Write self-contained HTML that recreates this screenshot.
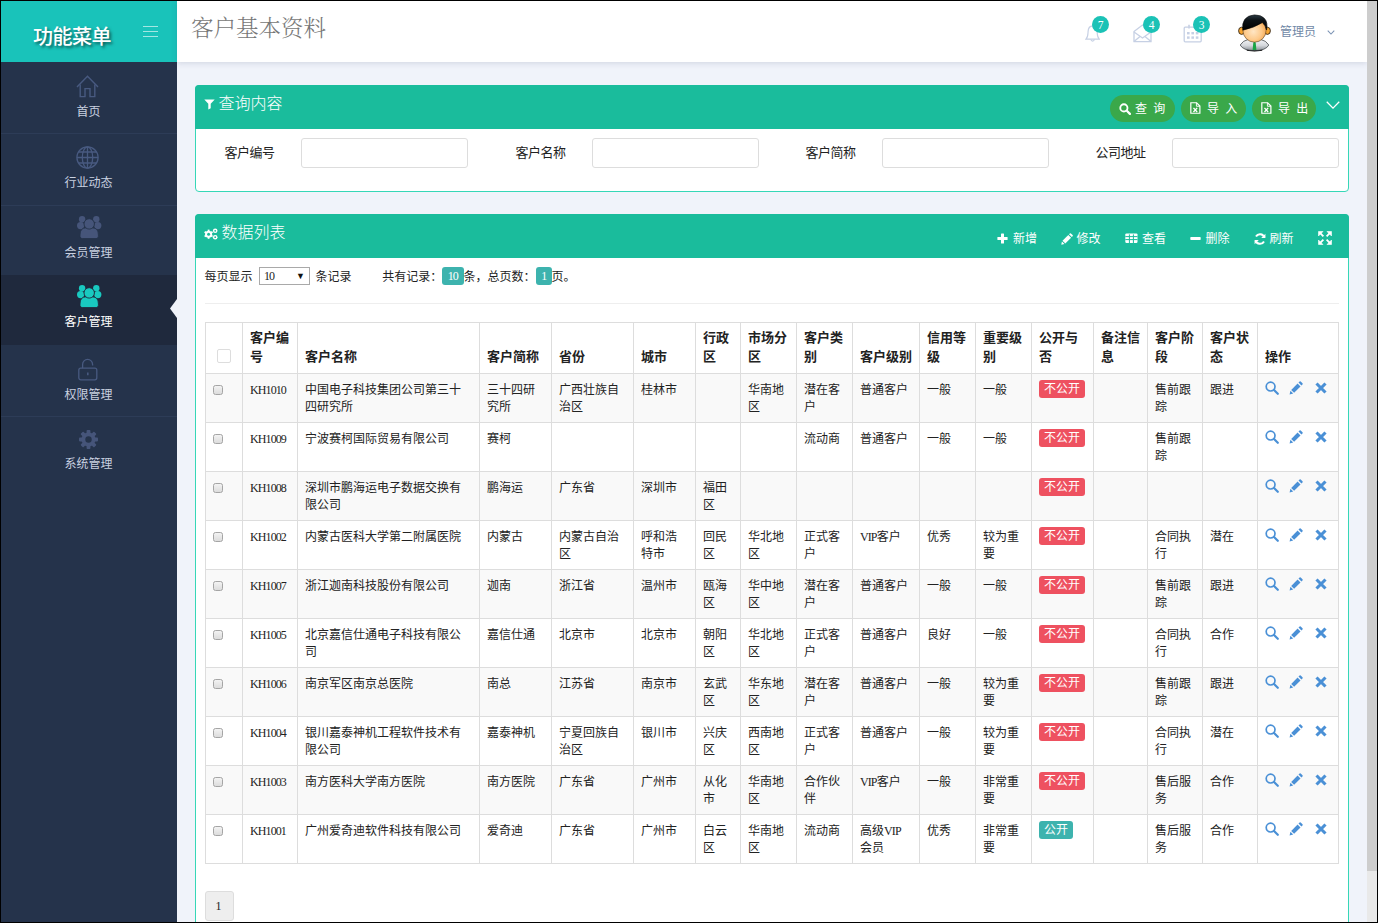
<!DOCTYPE html>
<html lang="zh-CN">
<head>
<meta charset="utf-8">
<title>客户基本资料</title>
<style>
*{box-sizing:border-box;}
html,body{margin:0;padding:0;}
body{width:1378px;height:923px;overflow:hidden;background:#f0f3fa;font-family:"Liberation Sans","Noto Sans CJK SC",sans-serif;font-size:12px;color:#333;position:relative;}
#frame{position:absolute;left:0;top:0;width:1378px;height:923px;overflow:hidden;}
#edge{position:absolute;left:0;top:0;width:1378px;height:923px;border:1px solid #000;z-index:99;pointer-events:none;}
.abs{position:absolute;}
/* sidebar */
#side{position:absolute;left:0;top:0;width:177px;height:923px;background:#25334b;}
#brand{position:absolute;left:0;top:0;width:177px;height:62px;background:#19c3ba;}
#brand .t{position:absolute;left:33px;top:21.5px;font-size:20px;line-height:30px;font-weight:500;color:#fff;letter-spacing:-.5px;text-shadow:2px 2px 3px rgba(0,0,0,.55);white-space:nowrap;}
#brand i{position:absolute;left:143px;width:15px;height:1px;background:rgba(255,255,255,.6);}
.mi{position:absolute;left:0;width:177px;}
.mi .lb{position:absolute;left:0;width:177px;text-align:center;font-size:12px;line-height:16px;color:#c9d1e0;}
.mi svg{position:absolute;}
.mi.on{background:#1f293d;}
.mi.on .lb{color:#fff;}
.sep{position:absolute;left:0;width:177px;height:1px;background:#2d3c57;}
/* top */
#top{position:absolute;left:177px;top:0;width:1190px;height:62px;background:#fff;box-shadow:0 1px 6px rgba(60,70,110,.18);}
#top h1{position:absolute;left:14px;top:11.5px;margin:0;font-family:"Liberation Serif","Noto Serif CJK SC",serif;font-weight:300;font-size:22.5px;line-height:34px;color:#777;white-space:nowrap;}
.bdg{position:absolute;top:16px;width:17px;height:17px;border-radius:50%;background:#1bc2b6;color:#fff;font-family:"Liberation Serif",serif;font-size:11.5px;line-height:18.5px;text-align:center;}
#user{position:absolute;left:1102px;top:24px;font-size:12px;line-height:16px;color:#7088a6;white-space:nowrap;}
/* scroll */
#sb{position:absolute;left:1367px;top:0;width:11px;height:923px;background:#e9e9e9;}
#sb b{position:absolute;left:0;top:0;width:11px;height:871px;background:#cdcdcd;}
/* panels */
.pn{position:absolute;left:195px;width:1154px;background:#fff;border:1px solid #36d7b7;border-radius:4px;}
.ph{position:absolute;left:-1px;top:-1px;width:1154px;height:44px;background:#1abc9c;border-radius:4px 4px 0 0;color:#fff;}
.ph .tt{position:absolute;left:23.5px;top:8px;font-family:"Liberation Serif","Noto Sans CJK SC",sans-serif;font-weight:300;font-size:16px;line-height:22px;white-space:nowrap;}
.gb{position:absolute;top:10px;height:27px;width:65px;border-radius:14px;background:#3aa84a;color:#fff;font-size:12px;line-height:28.5px;white-space:nowrap;}
.gb span{position:absolute;left:25px;top:0;word-spacing:3px;}
.gb svg{position:absolute;}
.fl{position:absolute;top:57px;width:80px;text-align:right;font-size:13px;line-height:20px;color:#222;white-space:nowrap;letter-spacing:-.5px;}
.fi{position:absolute;top:52px;width:167px;height:30px;border:1px solid #ddd;border-radius:3px;background:#fff;}
.tl{position:absolute;top:15px;font-size:12px;line-height:20px;color:#fff;white-space:nowrap;}
.tl svg{position:absolute;}

.rc{position:absolute;top:51.5px;font-size:12px;line-height:20px;color:#222;white-space:nowrap;}
.sel{position:absolute;left:63px;top:52px;width:51px;height:18px;border:1px solid #a9a9a9;background:#fff;font-size:12px;line-height:16px;padding-left:4px;color:#222;}
.sel b{position:absolute;right:4px;top:0;font-size:9px;font-weight:normal;color:#111;}
.rb{position:absolute;top:52px;height:18px;border-radius:3px;background:#3db3ae;color:#fff;font-size:12px;line-height:18px;text-align:center;}
.hr{position:absolute;left:9px;top:88px;width:1134px;height:1px;background:#eee;}
.la{font-family:"Liberation Serif",serif;letter-spacing:-.9px;}
table.grid{position:absolute;left:9px;top:107px;width:1133px;border-collapse:collapse;table-layout:fixed;font-size:12px;line-height:17px;color:#222;}
table.grid td,table.grid th{border:1px solid #ddd;padding:8px 8px 6px 7px;vertical-align:top;text-align:left;word-break:break-all;}
table.grid th{font-size:13px;line-height:18.5px;font-weight:bold;vertical-align:bottom;height:51px;padding:4px 4px 7px 7px;color:#222;}
table.grid td{height:49px;}
tr.odd td{background:#f9f9f9;}
.ck{display:block;width:10px;height:10px;margin:3px 0 0 0;border:1px solid #a5a5a5;border-radius:2.5px;background:linear-gradient(#f3f3f3,#dcdcdc);}
.hck{display:block;width:14px;height:14px;margin:0 0 3px 4px;border:1px solid #ddd;border-radius:2px;background:#fff;}
.lb2{position:relative;top:-2px;display:inline-block;height:18px;line-height:19px;padding:0 5px;border-radius:3px;color:#fff;font-size:12px;vertical-align:top;}
.npub{background:#ee5160;}
.pub{background:#3db3ae;}
.ops{position:relative;top:-2px;height:17px;}
.ops svg{position:absolute;}
.pg{position:absolute;left:9px;top:676px;width:29px;height:30px;border:1px solid #ddd;border-radius:3px;background:#eee;text-align:center;font-size:12px;line-height:28px;color:#222;padding-right:3px;}
</style>
</head>
<body>
<div id="frame">
<div id="side">
 <div id="brand"><div class="t">功能菜单</div><i style="top:26px"></i><i style="top:31px"></i><i style="top:36px"></i></div>
 <div class="mi on" style="top:275px;height:70px"></div>
 <div class="sep" style="top:133px"></div><div class="sep" style="top:205px"></div><div class="sep" style="top:416px"></div>
 <!-- home -->
 <svg class="abs" style="left:76px;top:75px" width="23" height="23" viewBox="0 0 23 23" fill="none" stroke="#485a80" stroke-width="1.4"><path d="M1 12 L11.5 1.2 L22 12"/><path d="M4.2 9.5 V21.6 H9 V13.6 H14 V21.6 H18.8 V9.5"/></svg>
 <div class="mi"><div class="lb" style="top:104px">首页</div></div>
 <!-- globe -->
 <svg class="abs" style="left:76px;top:146px" width="23" height="23" viewBox="0 0 23 23" fill="none" stroke="#485a80" stroke-width="1.3"><circle cx="11.5" cy="11.5" r="10.6"/><ellipse cx="11.5" cy="11.5" rx="5.2" ry="10.6"/><path d="M11.5 .9 V22.1 M.9 11.5 H22.1 M2.6 6 H20.4 M2.6 17 H20.4"/></svg>
 <div class="mi"><div class="lb" style="top:175px">行业动态</div></div>
 <!-- users -->
 <svg class="abs" style="left:76.8px;top:215.6px" width="25" height="23" viewBox="0 0 25 23" fill="#46557a"><circle cx="5.1" cy="3.2" r="3.2"/><circle cx="19.3" cy="3.2" r="3.2"/><circle cx="3.6" cy="9.6" r="3.6"/><circle cx="20.8" cy="9.6" r="3.6"/><path d="M3 20.3 V19 Q3 11.8 9 11.8 H15.4 Q21.4 11.8 21.4 19 V20.3 Q21.4 22.6 19.2 22.6 H5.2 Q3 22.6 3 20.3 Z" stroke="#25334b" stroke-width=".9"/><circle cx="12.2" cy="7.9" r="5.2" stroke="#25334b" stroke-width=".9"/></svg>
 <div class="mi"><div class="lb" style="top:245px">会员管理</div></div>
 <svg class="abs" style="left:76.8px;top:284.8px" width="25" height="23" viewBox="0 0 25 23" fill="#19c9c0"><circle cx="5.1" cy="3.2" r="3.2"/><circle cx="19.3" cy="3.2" r="3.2"/><circle cx="3.6" cy="9.6" r="3.6"/><circle cx="20.8" cy="9.6" r="3.6"/><path d="M3 20.3 V19 Q3 11.8 9 11.8 H15.4 Q21.4 11.8 21.4 19 V20.3 Q21.4 22.6 19.2 22.6 H5.2 Q3 22.6 3 20.3 Z" stroke="#1f293d" stroke-width=".9"/><circle cx="12.2" cy="7.9" r="5.2" stroke="#1f293d" stroke-width=".9"/></svg>
 <div class="mi"><div class="lb" style="top:314px;color:#fff">客户管理</div></div>
 <svg class="abs" style="left:170px;top:299px" width="7" height="19" viewBox="0 0 7 19"><path d="M7 0 L0 9.5 L7 19 Z" fill="#f0f3fa"/></svg>
 <!-- lock -->
 <svg class="abs" style="left:78px;top:358px" width="20" height="23" viewBox="0 0 20 23" fill="none" stroke="#485a80" stroke-width="1.3"><rect x=".8" y="10.2" width="18" height="11.6" rx="2"/><path d="M4.6 10.2 V6.4 A5 5 0 0 1 14.6 6.4 V7.6"/><path d="M9.8 14.6 V17.2" stroke-width="1.6"/></svg>
 <div class="mi"><div class="lb" style="top:387px">权限管理</div></div>
 <!-- gear -->
 <svg class="abs" style="left:79px;top:430px" width="19" height="19" viewBox="0 0 19 19"><g fill="#46557a"><circle cx="9.5" cy="9.5" r="7"/><g id="tg"><rect x="7.6" y="0" width="3.8" height="19" rx=".8"/><rect x="7.6" y="0" width="3.8" height="19" rx=".8" transform="rotate(45 9.5 9.5)"/><rect x="7.6" y="0" width="3.8" height="19" rx=".8" transform="rotate(90 9.5 9.5)"/><rect x="7.6" y="0" width="3.8" height="19" rx=".8" transform="rotate(135 9.5 9.5)"/></g></g><circle cx="9.5" cy="9.5" r="3.2" fill="#25334b"/></svg>
 <div class="mi"><div class="lb" style="top:456px">系统管理</div></div>
</div>

<div id="top">
 <h1>客户基本资料</h1>
 <!-- bell -->
 <svg class="abs" style="left:907.6px;top:25px" width="15.4" height="18" preserveAspectRatio="none" viewBox="0 0 17 18" fill="none" stroke="#c6d0e4" stroke-width="1.3"><path d="M1 14.2 C3.4 12.2 3.2 9.6 3.4 6.6 C3.6 3 5.6 1 8.4 1 C11.2 1 13.2 3 13.4 6.6 C13.6 9.6 13.4 12.2 15.8 14.2 Z"/><path d="M6.4 14.4 A2.1 2.4 0 0 0 10.4 14.4"/></svg>
 <div class="bdg" style="left:915px">7</div>
 <!-- envelope open -->
 <svg class="abs" style="left:956px;top:24px" width="19" height="19" viewBox="0 0 19 19" fill="none" stroke="#c6d0e4" stroke-width="1.3"><path d="M1 7.6 L9.5 1 L18 7.6 V17.6 H1 Z"/><path d="M1 8 L9.5 14 L18 8"/><path d="M1 17.6 L7 12.4 M18 17.6 L12 12.4"/></svg>
 <div class="bdg" style="left:966px">4</div>
 <!-- calendar -->
 <svg class="abs" style="left:1006px;top:24px" width="20" height="19" viewBox="0 0 20 19" fill="none" stroke="#c6d0e4" stroke-width="1.3"><rect x="1.2" y="3.2" width="17" height="14.6" rx="1"/><path d="M6 .8 V4.6 M14 .8 V4.6" stroke-width="1.6"/><g fill="#c6d0e4" stroke="none"><rect x="4" y="8" width="2.6" height="2.4"/><rect x="8.4" y="8" width="2.6" height="2.4"/><rect x="12.8" y="8" width="2.6" height="2.4"/><rect x="4" y="12.4" width="2.6" height="2.4"/><rect x="8.4" y="12.4" width="2.6" height="2.4"/><rect x="12.8" y="12.4" width="2.6" height="2.4"/></g></svg>
 <div class="bdg" style="left:1016px">3</div>
 <!-- avatar -->
 <svg class="abs" style="left:1060px;top:14px" width="36" height="38" viewBox="0 0 36 38">
  <defs>
   <radialGradient id="fc" cx=".45" cy=".55" r=".6"><stop offset="0" stop-color="#ffe6c4"/><stop offset=".6" stop-color="#fdc98a"/><stop offset="1" stop-color="#f2a24a"/></radialGradient>
   <linearGradient id="st" x1="0" y1="0" x2="0" y2="1"><stop offset="0" stop-color="#f4f5f7"/><stop offset=".55" stop-color="#d4d7db"/><stop offset="1" stop-color="#8a9097"/></linearGradient>
   <linearGradient id="hr" x1="0" y1="0" x2="0" y2="1"><stop offset="0" stop-color="#2a3a44"/><stop offset=".35" stop-color="#0d1216"/><stop offset="1" stop-color="#000"/></linearGradient>
  </defs>
  <ellipse cx="17.5" cy="36.2" rx="8" ry="1.2" fill="#111"/>
  <path d="M3.2 31 Q5.6 26.6 12 25.2 L23 25.2 Q29.4 26.6 31.8 31 Q29 36.6 17.5 36.6 Q6 36.6 3.2 31 Z" fill="url(#st)" stroke="#2b3034" stroke-width=".7"/>
  <path d="M13.4 26 L17.5 30 L21.6 26 Z" fill="#fff"/>
  <path d="M16.3 28.6 L17.5 27.6 L18.7 28.6 L19.4 36 L15.6 36 Z" fill="#18a344"/>
  <ellipse cx="4.6" cy="16.8" rx="3" ry="3.6" fill="#f7a531" stroke="#1a1208" stroke-width=".8"/>
  <ellipse cx="30.4" cy="16.8" rx="3" ry="3.6" fill="#f7a531" stroke="#1a1208" stroke-width=".8"/>
  <ellipse cx="17.5" cy="16.4" rx="11.6" ry="11.8" fill="url(#fc)" stroke="#3a2a18" stroke-width=".5"/>
  <path d="M5.8 16.2 Q4 2 17.4 .9 Q24.4 .8 27.4 4.4 Q31 8.2 29.6 16 Q28.6 11.2 25.4 8.6 Q17.6 13.6 5.8 16.2 Z" fill="url(#hr)" stroke="#000" stroke-width=".6"/>
 </svg>
 <div id="user" style="left:1103px;top:24px">管理员</div>
 <svg class="abs" style="left:1149.5px;top:29.5px" width="8" height="5.3" viewBox="0 0 9 6" fill="none" stroke="#7b93b4" stroke-width="1.2"><path d="M.8 .8 L4.5 4.6 L8.2 .8"/></svg>
</div>

<div class="pn" style="top:85px;height:107px">
 <div class="ph">
  <svg class="abs" style="left:9px;top:14px" width="11" height="11" viewBox="0 0 11 11" fill="#fff"><path d="M.3 .4 H10.7 L6.7 4.8 V9.2 L4.3 10.6 V4.8 Z"/></svg>
  <div class="tt">查询内容</div>
  <div class="gb" style="left:915px"><svg style="left:9px;top:7.5px" width="12" height="12" viewBox="0 0 13 13" fill="none" stroke="#fff"><circle cx="5.3" cy="5.3" r="3.9" stroke-width="2"/><path d="M8.2 8.2 L11.8 11.8" stroke-width="2.4" stroke-linecap="round"/></svg><span>查 询</span></div>
  <div class="gb" style="left:986px"><svg style="left:9px;top:7px" width="11" height="12" viewBox="0 0 12 13" fill="none" stroke="#fff" stroke-width="1.3"><path d="M.9 .8 H7.2 L10.8 4.4 V12.2 H.9 Z"/><path d="M7 .8 V4.6 H10.8" stroke-width="1"/><path d="M3.8 6.4 L7.8 10.8 M7.8 6.4 L3.8 10.8" stroke-width="1.5"/></svg><span style="left:26px">导 入</span></div>
  <div class="gb" style="left:1057px;width:64px"><svg style="left:9px;top:7px" width="11" height="12" viewBox="0 0 12 13" fill="none" stroke="#fff" stroke-width="1.3"><path d="M.9 .8 H7.2 L10.8 4.4 V12.2 H.9 Z"/><path d="M7 .8 V4.6 H10.8" stroke-width="1"/><path d="M3.8 6.4 L7.8 10.8 M7.8 6.4 L3.8 10.8" stroke-width="1.5"/></svg><span style="left:26px">导 出</span></div>
  <svg class="abs" style="left:1130.5px;top:15.5px" width="14" height="8.4" viewBox="0 0 15 9" fill="none" stroke="#fff" stroke-width="1.4"><path d="M.8 .8 L7.5 7.6 L14.2 .8"/></svg>
 </div>
 <div class="fl" style="left:-1.5px">客户编号</div><div class="fi" style="left:105px"></div>
 <div class="fl" style="left:289.5px">客户名称</div><div class="fi" style="left:396px"></div>
 <div class="fl" style="left:579.5px">客户简称</div><div class="fi" style="left:686px"></div>
 <div class="fl" style="left:869.5px">公司地址</div><div class="fi" style="left:976px"></div>
</div>

<div class="pn" style="top:214px;height:730px">
 <div class="ph">
  <svg class="abs" style="left:9px;top:14px" width="14" height="12" viewBox="0 0 14 12" fill="#fff"><g><circle cx="4.6" cy="6.2" r="3.5"/><rect x="3.7" y="1.6" width="1.8" height="9.2"/><rect x="3.7" y="1.6" width="1.8" height="9.2" transform="rotate(60 4.6 6.2)"/><rect x="3.7" y="1.6" width="1.8" height="9.2" transform="rotate(120 4.6 6.2)"/></g><circle cx="4.6" cy="6.2" r="1.5" fill="#1abc9c"/><circle cx="11.2" cy="2.8" r="2.3"/><circle cx="11.2" cy="2.8" r=".9" fill="#1abc9c"/><circle cx="11.2" cy="9.2" r="2.3"/><circle cx="11.2" cy="9.2" r=".9" fill="#1abc9c"/></svg>
  <div class="tt" style="left:26.5px">数据列表</div>
  <div class="tl" style="left:802px"><svg style="left:0;top:4px" width="11" height="11" viewBox="0 0 11 11" fill="#fff"><rect x="4" y=".4" width="3" height="10.2" rx=".6"/><rect x=".4" y="4" width="10.2" height="3" rx=".6"/></svg><span style="position:absolute;left:16px;top:0">新增</span></div>
  <div class="tl" style="left:865.5px"><svg style="left:0;top:4px" width="12" height="12" viewBox="0 0 12 12" fill="#fff"><path d="M.3 11.7 L.9 8.5 L3.5 11.1 Z"/><path d="M1.5 7.7 L7.3 1.9 L10.1 4.7 L4.3 10.5 Z"/><path d="M8 1.2 L8.8 .4 Q9.3 -.1 9.9 .4 L11.6 2.1 Q12.1 2.7 11.6 3.2 L10.8 4 Z"/></svg><span style="position:absolute;left:16px;top:0">修改</span></div>
  <div class="tl" style="left:930px"><svg style="left:0;top:4px" width="13" height="11" viewBox="0 0 13 11"><rect x=".3" y=".4" width="12.2" height="9.6" rx="1.2" fill="#fff"/><path d="M.3 3.6 H12.5 M.3 6.6 H12.5 M4.4 1.4 V10 M8.4 1.4 V10" stroke="#1abc9c" stroke-width="1" fill="none"/></svg><span style="position:absolute;left:17px;top:0">查看</span></div>
  <div class="tl" style="left:995px"><svg style="left:0;top:8px" width="11" height="3" viewBox="0 0 11 3" fill="#fff"><rect x=".3" y="0" width="10.4" height="3" rx=".7"/></svg><span style="position:absolute;left:15.5px;top:0">删除</span></div>
  <div class="tl" style="left:1058.5px"><svg style="left:0;top:4px" width="12" height="12" viewBox="0 0 12 12" fill="none" stroke="#fff" stroke-width="2"><path d="M10.4 4.4 A4.6 4.6 0 0 0 2 3.6"/><path d="M1.6 7.6 A4.6 4.6 0 0 0 10 8.4"/><path d="M11.4 .8 V5 H7.2 Z M.6 11.2 V7 H4.8 Z" fill="#fff" stroke="none"/></svg><span style="position:absolute;left:16px;top:0">刷新</span></div>
  <svg class="abs" style="left:1123px;top:17px" width="14" height="14" viewBox="0 0 14 14" fill="#fff" stroke="#fff"><path d="M.5 .5 H5 L.5 5 Z M13.5 .5 V5 L9 .5 Z M.5 13.5 V9 L5 13.5 Z M13.5 13.5 H9 L13.5 9 Z" stroke-width=".6" stroke-linejoin="round"/><path d="M2.2 2.2 L5.4 5.4 M11.8 2.2 L8.6 5.4 M2.2 11.8 L5.4 8.6 M11.8 11.8 L8.6 8.6" stroke-width="1.8"/></svg>
 </div>
 <div class="rc" style="left:8.6px">每页显示</div>
 <div class="sel"><span class="la">10</span><b>▼</b></div>
 <div class="rc" style="left:119.5px">条记录</div>
 <div class="rc" style="left:186.2px">共有记录：</div>
 <div class="rb" style="left:246px;width:21.5px"><span class="la">10</span></div>
 <div class="rc" style="left:267.5px">条，总页数：</div>
 <div class="rb" style="left:340px;width:15.5px"><span class="la">1</span></div>
 <div class="rc" style="left:355.5px">页。</div>
 <div class="hr"></div>
 <table class="grid"><colgroup><col style="width:37px"><col style="width:55px"><col style="width:182px"><col style="width:72px"><col style="width:82px"><col style="width:62px"><col style="width:45px"><col style="width:56px"><col style="width:56px"><col style="width:67px"><col style="width:56px"><col style="width:56px"><col style="width:62px"><col style="width:54px"><col style="width:55px"><col style="width:55px"><col style="width:81px"></colgroup>
<thead><tr><th><span class="hck"></span></th><th>客户编号</th><th>客户名称</th><th>客户简称</th><th>省份</th><th>城市</th><th>行政区</th><th>市场分区</th><th>客户类别</th><th style="white-space:nowrap">客户级别</th><th>信用等级</th><th>重要级别</th><th>公开与否</th><th>备注信息</th><th>客户阶段</th><th>客户状态</th><th>操作</th></tr></thead><tbody>
<tr class="odd"><td><span class="ck"></span></td><td><span class="la">KH1010</span></td><td>中国电子科技集团公司第三十四研究所</td><td>三十四研究所</td><td>广西壮族自治区</td><td>桂林市</td><td></td><td>华南地区</td><td>潜在客户</td><td>普通客户</td><td>一般</td><td>一般</td><td><span class="lb2 npub">不公开</span></td><td></td><td>售前跟踪</td><td>跟进</td><td><div class="ops"><svg style="left:0;top:1px" width="14" height="14" viewBox="0 0 14 14" fill="none" stroke="#4a90d6"><circle cx="5.6" cy="5.6" r="4.4" stroke-width="1.7"/><path d="M9 9 L12.8 12.8" stroke-width="2.2" stroke-linecap="round"/></svg><svg style="left:24px;top:1px" width="14" height="14" viewBox="0 0 14 14" fill="#4a90d6"><path d="M.6 13.4 L1.4 9.8 L4.2 12.6 Z"/><path d="M2.2 8.9 L8.6 2.5 L11.5 5.4 L5.1 11.8 Z"/><path d="M9.5 1.6 L10.6 .5 Q11.1 0 11.7 .5 L13.5 2.3 Q14 2.9 13.5 3.4 L12.4 4.5 Z"/></svg><svg style="left:50px;top:2px" width="12" height="12" viewBox="0 0 12 12" fill="none" stroke="#4a90d6" stroke-width="3.1"><path d="M1.5 1.5 L10.5 10.5 M10.5 1.5 L1.5 10.5"/></svg></div></td></tr>
<tr class="even"><td><span class="ck"></span></td><td><span class="la">KH1009</span></td><td>宁波赛柯国际贸易有限公司</td><td>赛柯</td><td></td><td></td><td></td><td></td><td>流动商</td><td>普通客户</td><td>一般</td><td>一般</td><td><span class="lb2 npub">不公开</span></td><td></td><td>售前跟踪</td><td></td><td><div class="ops"><svg style="left:0;top:1px" width="14" height="14" viewBox="0 0 14 14" fill="none" stroke="#4a90d6"><circle cx="5.6" cy="5.6" r="4.4" stroke-width="1.7"/><path d="M9 9 L12.8 12.8" stroke-width="2.2" stroke-linecap="round"/></svg><svg style="left:24px;top:1px" width="14" height="14" viewBox="0 0 14 14" fill="#4a90d6"><path d="M.6 13.4 L1.4 9.8 L4.2 12.6 Z"/><path d="M2.2 8.9 L8.6 2.5 L11.5 5.4 L5.1 11.8 Z"/><path d="M9.5 1.6 L10.6 .5 Q11.1 0 11.7 .5 L13.5 2.3 Q14 2.9 13.5 3.4 L12.4 4.5 Z"/></svg><svg style="left:50px;top:2px" width="12" height="12" viewBox="0 0 12 12" fill="none" stroke="#4a90d6" stroke-width="3.1"><path d="M1.5 1.5 L10.5 10.5 M10.5 1.5 L1.5 10.5"/></svg></div></td></tr>
<tr class="odd"><td><span class="ck"></span></td><td><span class="la">KH1008</span></td><td>深圳市鹏海运电子数据交换有限公司</td><td>鹏海运</td><td>广东省</td><td>深圳市</td><td>福田区</td><td></td><td></td><td></td><td></td><td></td><td><span class="lb2 npub">不公开</span></td><td></td><td></td><td></td><td><div class="ops"><svg style="left:0;top:1px" width="14" height="14" viewBox="0 0 14 14" fill="none" stroke="#4a90d6"><circle cx="5.6" cy="5.6" r="4.4" stroke-width="1.7"/><path d="M9 9 L12.8 12.8" stroke-width="2.2" stroke-linecap="round"/></svg><svg style="left:24px;top:1px" width="14" height="14" viewBox="0 0 14 14" fill="#4a90d6"><path d="M.6 13.4 L1.4 9.8 L4.2 12.6 Z"/><path d="M2.2 8.9 L8.6 2.5 L11.5 5.4 L5.1 11.8 Z"/><path d="M9.5 1.6 L10.6 .5 Q11.1 0 11.7 .5 L13.5 2.3 Q14 2.9 13.5 3.4 L12.4 4.5 Z"/></svg><svg style="left:50px;top:2px" width="12" height="12" viewBox="0 0 12 12" fill="none" stroke="#4a90d6" stroke-width="3.1"><path d="M1.5 1.5 L10.5 10.5 M10.5 1.5 L1.5 10.5"/></svg></div></td></tr>
<tr class="even"><td><span class="ck"></span></td><td><span class="la">KH1002</span></td><td>内蒙古医科大学第二附属医院</td><td>内蒙古</td><td>内蒙古自治区</td><td>呼和浩特市</td><td>回民区</td><td>华北地区</td><td>正式客户</td><td><span class="la">VIP</span>客户</td><td>优秀</td><td>较为重要</td><td><span class="lb2 npub">不公开</span></td><td></td><td>合同执行</td><td>潜在</td><td><div class="ops"><svg style="left:0;top:1px" width="14" height="14" viewBox="0 0 14 14" fill="none" stroke="#4a90d6"><circle cx="5.6" cy="5.6" r="4.4" stroke-width="1.7"/><path d="M9 9 L12.8 12.8" stroke-width="2.2" stroke-linecap="round"/></svg><svg style="left:24px;top:1px" width="14" height="14" viewBox="0 0 14 14" fill="#4a90d6"><path d="M.6 13.4 L1.4 9.8 L4.2 12.6 Z"/><path d="M2.2 8.9 L8.6 2.5 L11.5 5.4 L5.1 11.8 Z"/><path d="M9.5 1.6 L10.6 .5 Q11.1 0 11.7 .5 L13.5 2.3 Q14 2.9 13.5 3.4 L12.4 4.5 Z"/></svg><svg style="left:50px;top:2px" width="12" height="12" viewBox="0 0 12 12" fill="none" stroke="#4a90d6" stroke-width="3.1"><path d="M1.5 1.5 L10.5 10.5 M10.5 1.5 L1.5 10.5"/></svg></div></td></tr>
<tr class="odd"><td><span class="ck"></span></td><td><span class="la">KH1007</span></td><td>浙江迦南科技股份有限公司</td><td>迦南</td><td>浙江省</td><td>温州市</td><td>瓯海区</td><td>华中地区</td><td>潜在客户</td><td>普通客户</td><td>一般</td><td>一般</td><td><span class="lb2 npub">不公开</span></td><td></td><td>售前跟踪</td><td>跟进</td><td><div class="ops"><svg style="left:0;top:1px" width="14" height="14" viewBox="0 0 14 14" fill="none" stroke="#4a90d6"><circle cx="5.6" cy="5.6" r="4.4" stroke-width="1.7"/><path d="M9 9 L12.8 12.8" stroke-width="2.2" stroke-linecap="round"/></svg><svg style="left:24px;top:1px" width="14" height="14" viewBox="0 0 14 14" fill="#4a90d6"><path d="M.6 13.4 L1.4 9.8 L4.2 12.6 Z"/><path d="M2.2 8.9 L8.6 2.5 L11.5 5.4 L5.1 11.8 Z"/><path d="M9.5 1.6 L10.6 .5 Q11.1 0 11.7 .5 L13.5 2.3 Q14 2.9 13.5 3.4 L12.4 4.5 Z"/></svg><svg style="left:50px;top:2px" width="12" height="12" viewBox="0 0 12 12" fill="none" stroke="#4a90d6" stroke-width="3.1"><path d="M1.5 1.5 L10.5 10.5 M10.5 1.5 L1.5 10.5"/></svg></div></td></tr>
<tr class="even"><td><span class="ck"></span></td><td><span class="la">KH1005</span></td><td>北京嘉信仕通电子科技有限公司</td><td>嘉信仕通</td><td>北京市</td><td>北京市</td><td>朝阳区</td><td>华北地区</td><td>正式客户</td><td>普通客户</td><td>良好</td><td>一般</td><td><span class="lb2 npub">不公开</span></td><td></td><td>合同执行</td><td>合作</td><td><div class="ops"><svg style="left:0;top:1px" width="14" height="14" viewBox="0 0 14 14" fill="none" stroke="#4a90d6"><circle cx="5.6" cy="5.6" r="4.4" stroke-width="1.7"/><path d="M9 9 L12.8 12.8" stroke-width="2.2" stroke-linecap="round"/></svg><svg style="left:24px;top:1px" width="14" height="14" viewBox="0 0 14 14" fill="#4a90d6"><path d="M.6 13.4 L1.4 9.8 L4.2 12.6 Z"/><path d="M2.2 8.9 L8.6 2.5 L11.5 5.4 L5.1 11.8 Z"/><path d="M9.5 1.6 L10.6 .5 Q11.1 0 11.7 .5 L13.5 2.3 Q14 2.9 13.5 3.4 L12.4 4.5 Z"/></svg><svg style="left:50px;top:2px" width="12" height="12" viewBox="0 0 12 12" fill="none" stroke="#4a90d6" stroke-width="3.1"><path d="M1.5 1.5 L10.5 10.5 M10.5 1.5 L1.5 10.5"/></svg></div></td></tr>
<tr class="odd"><td><span class="ck"></span></td><td><span class="la">KH1006</span></td><td>南京军区南京总医院</td><td>南总</td><td>江苏省</td><td>南京市</td><td>玄武区</td><td>华东地区</td><td>潜在客户</td><td>普通客户</td><td>一般</td><td>较为重要</td><td><span class="lb2 npub">不公开</span></td><td></td><td>售前跟踪</td><td>跟进</td><td><div class="ops"><svg style="left:0;top:1px" width="14" height="14" viewBox="0 0 14 14" fill="none" stroke="#4a90d6"><circle cx="5.6" cy="5.6" r="4.4" stroke-width="1.7"/><path d="M9 9 L12.8 12.8" stroke-width="2.2" stroke-linecap="round"/></svg><svg style="left:24px;top:1px" width="14" height="14" viewBox="0 0 14 14" fill="#4a90d6"><path d="M.6 13.4 L1.4 9.8 L4.2 12.6 Z"/><path d="M2.2 8.9 L8.6 2.5 L11.5 5.4 L5.1 11.8 Z"/><path d="M9.5 1.6 L10.6 .5 Q11.1 0 11.7 .5 L13.5 2.3 Q14 2.9 13.5 3.4 L12.4 4.5 Z"/></svg><svg style="left:50px;top:2px" width="12" height="12" viewBox="0 0 12 12" fill="none" stroke="#4a90d6" stroke-width="3.1"><path d="M1.5 1.5 L10.5 10.5 M10.5 1.5 L1.5 10.5"/></svg></div></td></tr>
<tr class="even"><td><span class="ck"></span></td><td><span class="la">KH1004</span></td><td>银川嘉泰神机工程软件技术有限公司</td><td>嘉泰神机</td><td>宁夏回族自治区</td><td>银川市</td><td>兴庆区</td><td>西南地区</td><td>正式客户</td><td>普通客户</td><td>一般</td><td>较为重要</td><td><span class="lb2 npub">不公开</span></td><td></td><td>合同执行</td><td>潜在</td><td><div class="ops"><svg style="left:0;top:1px" width="14" height="14" viewBox="0 0 14 14" fill="none" stroke="#4a90d6"><circle cx="5.6" cy="5.6" r="4.4" stroke-width="1.7"/><path d="M9 9 L12.8 12.8" stroke-width="2.2" stroke-linecap="round"/></svg><svg style="left:24px;top:1px" width="14" height="14" viewBox="0 0 14 14" fill="#4a90d6"><path d="M.6 13.4 L1.4 9.8 L4.2 12.6 Z"/><path d="M2.2 8.9 L8.6 2.5 L11.5 5.4 L5.1 11.8 Z"/><path d="M9.5 1.6 L10.6 .5 Q11.1 0 11.7 .5 L13.5 2.3 Q14 2.9 13.5 3.4 L12.4 4.5 Z"/></svg><svg style="left:50px;top:2px" width="12" height="12" viewBox="0 0 12 12" fill="none" stroke="#4a90d6" stroke-width="3.1"><path d="M1.5 1.5 L10.5 10.5 M10.5 1.5 L1.5 10.5"/></svg></div></td></tr>
<tr class="odd"><td><span class="ck"></span></td><td><span class="la">KH1003</span></td><td>南方医科大学南方医院</td><td>南方医院</td><td>广东省</td><td>广州市</td><td>从化市</td><td>华南地区</td><td>合作伙伴</td><td><span class="la">VIP</span>客户</td><td>一般</td><td>非常重要</td><td><span class="lb2 npub">不公开</span></td><td></td><td>售后服务</td><td>合作</td><td><div class="ops"><svg style="left:0;top:1px" width="14" height="14" viewBox="0 0 14 14" fill="none" stroke="#4a90d6"><circle cx="5.6" cy="5.6" r="4.4" stroke-width="1.7"/><path d="M9 9 L12.8 12.8" stroke-width="2.2" stroke-linecap="round"/></svg><svg style="left:24px;top:1px" width="14" height="14" viewBox="0 0 14 14" fill="#4a90d6"><path d="M.6 13.4 L1.4 9.8 L4.2 12.6 Z"/><path d="M2.2 8.9 L8.6 2.5 L11.5 5.4 L5.1 11.8 Z"/><path d="M9.5 1.6 L10.6 .5 Q11.1 0 11.7 .5 L13.5 2.3 Q14 2.9 13.5 3.4 L12.4 4.5 Z"/></svg><svg style="left:50px;top:2px" width="12" height="12" viewBox="0 0 12 12" fill="none" stroke="#4a90d6" stroke-width="3.1"><path d="M1.5 1.5 L10.5 10.5 M10.5 1.5 L1.5 10.5"/></svg></div></td></tr>
<tr class="even"><td><span class="ck"></span></td><td><span class="la">KH1001</span></td><td>广州爱奇迪软件科技有限公司</td><td>爱奇迪</td><td>广东省</td><td>广州市</td><td>白云区</td><td>华南地区</td><td>流动商</td><td>高级<span class="la">VIP</span>会员</td><td>优秀</td><td>非常重要</td><td><span class="lb2 pub">公开</span></td><td></td><td>售后服务</td><td>合作</td><td><div class="ops"><svg style="left:0;top:1px" width="14" height="14" viewBox="0 0 14 14" fill="none" stroke="#4a90d6"><circle cx="5.6" cy="5.6" r="4.4" stroke-width="1.7"/><path d="M9 9 L12.8 12.8" stroke-width="2.2" stroke-linecap="round"/></svg><svg style="left:24px;top:1px" width="14" height="14" viewBox="0 0 14 14" fill="#4a90d6"><path d="M.6 13.4 L1.4 9.8 L4.2 12.6 Z"/><path d="M2.2 8.9 L8.6 2.5 L11.5 5.4 L5.1 11.8 Z"/><path d="M9.5 1.6 L10.6 .5 Q11.1 0 11.7 .5 L13.5 2.3 Q14 2.9 13.5 3.4 L12.4 4.5 Z"/></svg><svg style="left:50px;top:2px" width="12" height="12" viewBox="0 0 12 12" fill="none" stroke="#4a90d6" stroke-width="3.1"><path d="M1.5 1.5 L10.5 10.5 M10.5 1.5 L1.5 10.5"/></svg></div></td></tr>
</tbody></table>
 <div class="pg"><span class="la">1</span></div>
</div>
<div id="sb"><b></b></div>
</div>
<div id="edge"></div>
</body>
</html>
